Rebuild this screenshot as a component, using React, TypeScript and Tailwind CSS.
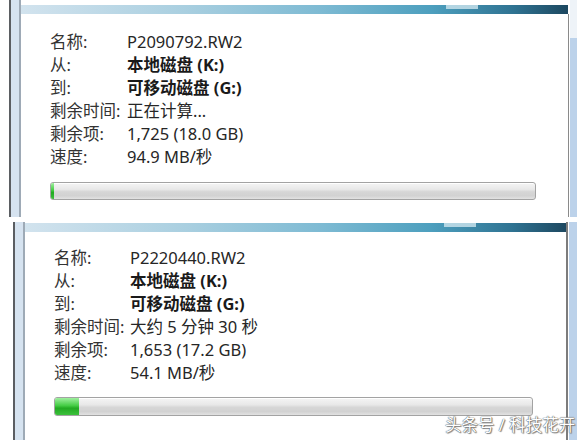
import React from "react";

type Row = { label: string; value: string; bold?: boolean };

const topRows: Row[] = [
  { label: "名称:", value: "P2090792.RW2" },
  { label: "从:", value: "本地磁盘 (K:)", bold: true },
  { label: "到:", value: "可移动磁盘 (G:)", bold: true },
  { label: "剩余时间:", value: "正在计算..." },
  { label: "剩余项:", value: "1,725 (18.0 GB)" },
  { label: "速度:", value: "94.9 MB/秒" },
];

const bottomRows: Row[] = [
  { label: "名称:", value: "P2220440.RW2" },
  { label: "从:", value: "本地磁盘 (K:)", bold: true },
  { label: "到:", value: "可移动磁盘 (G:)", bold: true },
  { label: "剩余时间:", value: "大约 5 分钟 30 秒" },
  { label: "剩余项:", value: "1,653 (17.2 GB)" },
  { label: "速度:", value: "54.1 MB/秒" },
];

function TitleBar() {
  return (
    <div className="relative h-[9px] shrink-0 bg-[linear-gradient(to_right,#d2e3ee,#a9cfe0_30%,#7dbad3_55%,#4d9fbe_75%,#2f7392_90%,#1d4860)]">
      {/* little grip notch */}
      <div className="absolute top-0 right-[90px] w-[32px] h-[4px] bg-[#cfe6ef] opacity-80" />
    </div>
  );
}

function Progress({ width, fill }: { width: string; fill: number }) {
  return (
    <div
      className={`${width} relative rounded-[3px] border border-[#a3a3a3] overflow-hidden bg-[linear-gradient(to_bottom,#f5f5f5,#e8e8e8_40%,#d6d6d6_55%,#d2d2d2_80%,#e2e2e2)] shadow-[inset_0_1px_0_#ffffff]`}
    >
      <div
        className="h-full bg-[linear-gradient(to_bottom,#9ff09f,#44cc44_45%,#22aa22_60%,#3cc03c)]"
        style={{ width: fill }}
      />
    </div>
  );
}

function Rows({ rows, labelW }: { rows: Row[]; labelW: string }) {
  return (
    <div className="flex flex-col">
      {rows.map((r) => (
        <div key={r.label} className="flex leading-[23px] h-[23px]">
          <span className={`${labelW} text-[#333333]`}>{r.label}</span>
          <span className={r.bold ? "font-bold text-[#1a1a1a]" : "text-[#262626]"}>{r.value}</span>
        </div>
      ))}
    </div>
  );
}

export default function App() {
  return (
    <div className="relative w-[587px] h-[440px] overflow-hidden bg-white text-[16.5px] font-['Noto_Sans','Noto_Sans_CJK_SC',sans-serif]">
      <div className="flex flex-col gap-[5px]">
        {/* first copy dialog */}
        <div className="ml-[9px] w-[568px] h-[217px] flex">
          <div className="flex shrink-0">
            <div className="w-[2px] bg-[#5b5e62]" />
            <div className="w-[8px] bg-[#d6e3f0]" />
            <div className="w-[2px] bg-[#9eaab6]" />
          </div>
          <div className="flex-1 flex flex-col pt-[5px]">
            <TitleBar />
            <div className="pl-[29px] pt-[16px]">
              <Rows rows={topRows} labelW="w-[77px]" />
              <div className="mt-[14px]">
                <Progress width="w-[486px] h-[18px]" fill={3} />
              </div>
            </div>
          </div>
          <div className="flex shrink-0">
            <div className="w-[1px] bg-[#8a8a8a] mt-[14px]" />
            <div className="w-[1px]" />
            <div className="w-[7px] flex flex-col">
              <div className="h-[38px] bg-[#eef3f8]" />
              <div className="flex-1 bg-[#bcd2ea]" />
            </div>
          </div>
        </div>

        {/* second copy dialog */}
        <div className="ml-[13px] w-[564px] h-[218px] flex">
          <div className="flex shrink-0">
            <div className="w-[2px] bg-[#5b5e62]" />
            <div className="w-[8px] bg-[#d6e3f0]" />
            <div className="w-[2px] bg-[#9eaab6]" />
          </div>
          <div className="flex-1 flex flex-col">
            <div className="h-[1px]" />
            <TitleBar />
            <div className="pl-[29px] pt-[14px]">
              <Rows rows={bottomRows} labelW="w-[76px]" />
              <div className="mt-[13px]">
                <Progress width="w-[479px] h-[19px]" fill={24} />
              </div>
            </div>
          </div>
          <div className="flex shrink-0">
            <div className="w-[2px] bg-[#7c7c7c]" />
            <div className="w-[1px]" />
            <div className="w-[8px] bg-[#bcd2ea]" />
          </div>
        </div>
      </div>

      {/* watermark */}
      <div className="absolute left-[445px] top-[414px] leading-[22px] text-[16.5px] text-white [text-shadow:0_0_1px_#555,0_0_1px_#555,1px_1px_1px_#888]">
        头条号 / 科技花开
      </div>
    </div>
  );
}
